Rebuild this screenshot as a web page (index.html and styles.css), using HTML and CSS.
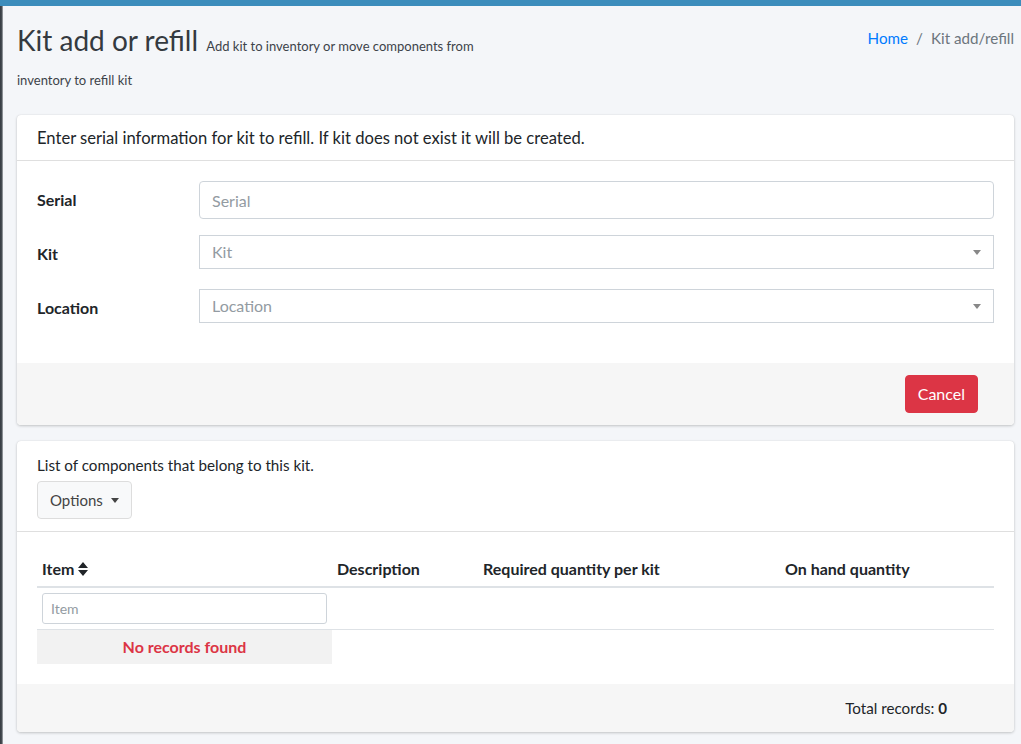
FILE: index.html
```html
<!DOCTYPE html>
<html>
<head>
<meta charset="utf-8">
<link rel="stylesheet" href="styles.css">
</head>
<body>
<div class="topbar"></div>
<div class="layout">
  <div class="sidebar-edge"></div>
  <div class="content">
    <div class="content-header">
      <h1 class="page-title">Kit add or refill <small>Add kit to inventory or move components from inventory to refill kit</small></h1>
      <ol class="breadcrumb">
        <li><a href="#">Home</a></li>
        <li class="sep">/</li>
        <li class="active">Kit add/refill</li>
      </ol>
    </div>

    <div class="card">
      <div class="card-header card-title">Enter serial information for kit to refill. If kit does not exist it will be created.</div>
      <div class="card-body form-body">
        <div class="form-row">
          <label class="form-label">Serial</label>
          <div class="form-field"><input class="input" type="text" placeholder="Serial"></div>
        </div>
        <div class="form-row">
          <label class="form-label">Kit</label>
          <div class="form-field"><div class="select"><span class="select-ph">Kit</span><span class="select-arrow"></span></div></div>
        </div>
        <div class="form-row">
          <label class="form-label">Location</label>
          <div class="form-field"><div class="select"><span class="select-ph">Location</span><span class="select-arrow"></span></div></div>
        </div>
      </div>
      <div class="card-footer footer-actions">
        <button class="btn btn-danger">Cancel</button>
      </div>
    </div>

    <div class="card">
      <div class="card-header list-header">
        <div class="list-text">List of components that belong to this kit.</div>
        <button class="btn btn-default">Options <span class="caret"></span></button>
      </div>
      <div class="card-body table-body">
        <table class="table">
          <colgroup>
            <col class="c1"><col class="c2"><col class="c3"><col class="c4">
          </colgroup>
          <thead>
            <tr>
              <th>Item <svg class="sort" viewBox="0 0 10 14" width="10" height="14"><path d="M5 0 L10 6 L0 6 Z M0 8 L10 8 L5 14 Z" fill="#212529"/></svg></th>
              <th>Description</th>
              <th>Required quantity per kit</th>
              <th>On hand quantity</th>
            </tr>
          </thead>
          <tbody>
            <tr class="filter-row">
              <td><input class="input input-sm" type="text" placeholder="Item"></td>
              <td></td><td></td><td></td>
            </tr>
            <tr class="empty-row">
              <td class="empty">No records found</td>
              <td class="blank"></td><td class="blank"></td><td class="blank"></td>
            </tr>
          </tbody>
        </table>
      </div>
      <div class="card-footer footer-total">Total records: <b>0</b></div>
    </div>
  </div>
</div>
</body>
</html>
```

FILE: styles.css
```css
* { box-sizing: border-box; }
html, body { margin: 0; padding: 0; }
body {
  font-family: "Lato", "Liberation Sans", sans-serif;
  font-size: 16px;
  line-height: 1.5;
  color: #212529;
  background: #f4f6f9;
  overflow: hidden;
}
.topbar { height: 6px; background: #3c8dbc; }
.layout { display: flex; min-height: 738px; }
.sidebar-edge {
  width: 3px;
  flex: 0 0 3px;
  background: linear-gradient(to right, #343a40 0, #4b5157 2px, #c9ccd0 3px);
}
.content { flex: 1; padding: 0 7px 0 14px; }

.content-header { display: flex; justify-content: space-between; align-items: flex-start; padding-top: 17px; }
.page-title {
  margin: 0;
  width: 480px;
  font-size: 28px;
  font-weight: 400;
  line-height: 34px;
  color: #343a40;
}
.page-title small { font-size: 13px; line-height: 1; color: #3d4349; font-weight: 400; margin-left: 1px; }
.breadcrumb { list-style: none; margin: 0; padding: 3px 0 0 0; display: flex; gap: 8px; font-size: 15.2px; line-height: 24px; color: #6c757d; }
.breadcrumb a { color: #007bff; text-decoration: none; }

.card {
  background: #fff;
  border-radius: 4px;
  box-shadow: 0 0 1px rgba(0,0,0,.125), 0 1px 3px rgba(0,0,0,.2);
  margin-top: 24px;
  margin-bottom: 16px;
  overflow: hidden;
}
.card + .card { margin-top: 0; }
.card-header {
  padding: 11px 20px 10px 20px;
  border-bottom: 1px solid rgba(0,0,0,.125);
  line-height: 24px;
}
.card-title { font-size: 16.6px; }
.card-body { padding: 20px; }
.card-footer { background: #f6f6f6; padding: 12px 20px; }

.form-row { display: flex; align-items: flex-start; margin-bottom: 16px; height: 38px; }
.form-label { width: 162px; flex: 0 0 162px; font-weight: 700; line-height: 38px; }
.form-field { flex: 1; }
.input {
  width: 100%;
  height: 38px;
  border: 1px solid #ced4da;
  border-radius: 4px;
  padding: 6px 12px;
  font: inherit;
  color: #495057;
  background: #fff;
}
.input::placeholder { color: #939ba2; }
.select {
  height: 34px;
  border: 1px solid #ced4da;
  border-radius: 0;
  display: flex;
  align-items: center;
  justify-content: space-between;
  padding: 0 12px;
}
.select-ph { color: #939ba2; line-height: 32px; }
.select-arrow {
  width: 0; height: 0;
  border-left: 4px solid transparent;
  border-right: 4px solid transparent;
  border-top: 5px solid #888;
}

.footer-actions { display: flex; justify-content: flex-end; padding-right: 36px; }
.btn {
  font: inherit;
  line-height: 24px;
  height: 38px;
  padding: 6px 12px;
  border-radius: 4px;
  border: 1px solid transparent;
}
.btn-danger { background: #dc3545; border-color: #dc3545; color: #fff; }
.btn-default { background: #f8f9fa; border-color: #ddd; color: #444; margin-top: 4px; display: inline-flex; align-items: center; gap: 8px; font-size: 15px; }
.caret {
  width: 0; height: 0;
  border-left: 4px solid transparent;
  border-right: 4px solid transparent;
  border-top: 5px solid #444;
}
.list-header { padding-top: 12px; padding-bottom: 12px; }
.list-text { font-size: 15.2px; }

.table { width: 100%; border-collapse: collapse; }
.c1 { width: 295px; } .c2 { width: 146px; } .c3 { width: 302px; } .c4 { width: 214px; }
.table th { text-align: left; padding: 5px; line-height: 24px; border-bottom: 2px solid #dee2e6; font-weight: 700; }
.table td { padding: 5px; line-height: 24px; }
.sort { vertical-align: -1px; margin-left: 0; }
.filter-row td { border-bottom: 1px solid #dee2e6; }
.input-sm { height: 31px; font-size: 14px; padding: 4px 8px; border-radius: 3px; }
.empty { background: #f2f2f2; color: #dc3545; font-weight: 700; text-align: center; padding: 5px; }
.footer-total { text-align: right; padding-right: 67px; line-height: 24px; font-size: 15.2px; }
```
